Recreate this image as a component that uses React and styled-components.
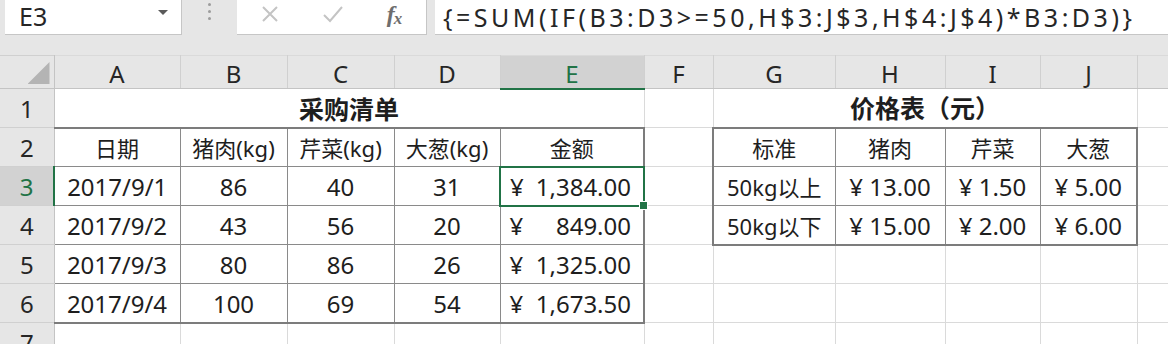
import React from 'react';
import styled, { createGlobalStyle } from 'styled-components';

const GlobalStyle = createGlobalStyle`
  html, body { margin: 0; padding: 0; background: #e6e6e6; overflow: hidden; }
  body { font-family: "Noto Sans", "Noto Sans CJK SC", sans-serif; }
`;

const GREEN = '#217346';
const GRID = '1px solid #dadada';
const HEAD_LINE = '1px solid #c4c4c4';
const HEAD_SEP = '1px solid #d0d0d0';
const THIN_DARK = '1px solid #8a8a8a';
const THICK_DARK = '2px solid #7c7c7c';
const SELECT = `2px solid ${GREEN}`;

const COLUMNS = [
  { key: '', w: 54 },
  { key: 'A', w: 126 },
  { key: 'B', w: 107 },
  { key: 'C', w: 107 },
  { key: 'D', w: 106 },
  { key: 'E', w: 144 },
  { key: 'F', w: 69 },
  { key: 'G', w: 122 },
  { key: 'H', w: 110 },
  { key: 'I', w: 95 },
  { key: 'J', w: 97 },
  { key: 'K', w: 90 },
];

const SELECTED = { r: 3, c: 5 };

const TABLES = [
  { r0: 2, r1: 6, c0: 1, c1: 5 },
  { r0: 2, r1: 4, c0: 7, c1: 10 },
];

const tableOf = (r, c) =>
  TABLES.findIndex((t) => r >= t.r0 && r <= t.r1 && c >= t.c0 && c <= t.c1);

// Shared edge below row r in column c
const hEdge = (r, c) => {
  if (r === 0) {
    if (c === SELECTED.c) return SELECT;
    return HEAD_LINE;
  }
  if (c === 0) return HEAD_SEP;
  if (c === SELECTED.c && (r === SELECTED.r || r + 1 === SELECTED.r)) return SELECT;
  const a = tableOf(r, c);
  const b = tableOf(r + 1, c);
  if (a >= 0 && a === b) return THIN_DARK;
  if (a >= 0 || b >= 0) return THICK_DARK;
  return GRID;
};

// Shared edge right of column c in row r
const vEdge = (r, c) => {
  if (r === 0) return c === 0 ? HEAD_LINE : HEAD_SEP;
  if (c === 0) return r === SELECTED.r ? SELECT : HEAD_LINE;
  if (r === SELECTED.r && (c === SELECTED.c || c + 1 === SELECTED.c)) return SELECT;
  const a = tableOf(r, c);
  const b = tableOf(r, c + 1);
  if (a >= 0 && a === b) return THIN_DARK;
  if (a >= 0 || b >= 0) return THICK_DARK;
  return GRID;
};

const edges = (r, c, span = 1) => ({
  $t: hEdge(r - 1, c),
  $b: hEdge(r, c),
  $l: c === 0 ? 'none' : vEdge(r, c - 1),
  $r: vEdge(r, c + span - 1),
});

/* ---------- formula bar ---------- */

const Frame = styled.div`
  width: 1168px;
  height: 344px;
  overflow: hidden;
  background: #e6e6e6;
  display: flex;
  flex-direction: column;
`;

const FormulaBar = styled.div`
  display: flex;
  height: 35px;
  padding-left: 5px;
  margin-bottom: 20px;
  flex: none;
`;

const Box = styled.div`
  background: #fff;
  border-bottom: 1px solid #c6c6c6;
  border-right: 1px solid #c6c6c6;
  box-sizing: border-box;
  height: 35px;
  display: flex;
  align-items: center;
  padding-bottom: 2px;
  line-height: 1.2;
`;

const NameBox = styled(Box)`
  width: 177px;
  padding-left: 14px;
  padding-right: 13px;
  justify-content: space-between;
  font-size: 25px;
  color: #262626;
`;

const DropArrow = styled.span`
  width: 0;
  height: 0;
  border-left: 5px solid transparent;
  border-right: 5px solid transparent;
  border-top: 5px solid #5a5a5a;
  margin-top: -8px;
`;

const Grip = styled.div`
  width: 55px;
  display: flex;
  flex-direction: column;
  align-items: center;
  gap: 4px;
  padding-top: 3px;
`;

const GripDot = styled.span`
  width: 3px;
  height: 3px;
  border-radius: 50%;
  background: #9c9c9c;
`;

const ButtonBox = styled(Box)`
  width: 190px;
  display: grid;
  grid-template-columns: 66px 60px 62px;
  justify-items: center;
  padding-bottom: 6px;
`;

const Fx = styled.span`
  font-family: "Liberation Serif", serif;
  font-style: italic;
  font-weight: bold;
  font-size: 24px;
  line-height: 1;
  color: #6e6e6e;
  letter-spacing: -1px;
  sub {
    font-size: 17px;
    vertical-align: -2px;
  }
`;

const FormulaInput = styled(Box)`
  flex: 1;
  min-width: 0;
  margin-left: 8px;
  padding: 0 0 0 8px;
  border-right: none;
  font-size: 25px;
  line-height: normal;
  color: #262626;
  letter-spacing: 3.5px;
  white-space: nowrap;
`;

const CancelIcon = () => (
  <svg width="20" height="20" viewBox="0 0 20 20">
    <path d="M3 3 L17 17 M17 3 L3 17" stroke="#c4c4c4" strokeWidth="2" fill="none" />
  </svg>
);

const EnterIcon = () => (
  <svg width="22" height="20" viewBox="0 0 22 20">
    <path d="M2 11 L8 17 L20 3" stroke="#c4c4c4" strokeWidth="2" fill="none" />
  </svg>
);

/* ---------- sheet ---------- */

const Sheet = styled.table`
  border-collapse: collapse;
  table-layout: fixed;
  width: ${COLUMNS.reduce((s, c) => s + c.w, 0)}px;
  background: #fff;
  font-size: 22px;
  color: #1e1e1e;
`;

const Col = styled.col`
  width: ${(p) => p.$w}px;
`;

const HeaderRow = styled.tr`
  height: 33px;
`;

const Row = styled.tr`
  height: 39px;
`;

const Cell = styled.td`
  padding: 2px 2px 0;
  position: relative;
  white-space: nowrap;
  overflow: visible;
  text-align: ${(p) => p.$align || 'center'};
  vertical-align: middle;
  line-height: 1;
  font-weight: ${(p) => (p.$bold ? 700 : 400)};
  font-size: ${(p) => (p.$bold ? '25px' : p.$num ? '24px' : '22px')};
  border-top: ${(p) => p.$t};
  border-bottom: ${(p) => p.$b};
  border-left: ${(p) => p.$l};
  border-right: ${(p) => p.$r};
`;

const ColHead = styled(Cell)`
  background: ${(p) => (p.$active ? '#d2d2d2' : '#e6e6e6')};
  color: ${(p) => (p.$active ? GREEN : '#262626')};
  font-size: 24px;
  padding-top: 4px;
`;

const RowHead = styled(Cell)`
  background: ${(p) => (p.$active ? '#d2d2d2' : '#e6e6e6')};
  color: ${(p) => (p.$active ? GREEN : '#262626')};
  font-size: 24px;
`;

const Corner = styled(Cell)`
  background: #e6e6e6;
  padding: 0;
`;

const CornerMark = styled.span`
  position: absolute;
  right: 4px;
  bottom: 4px;
  width: 22px;
  height: 22px;
  background: #b4b4b4;
  clip-path: polygon(100% 0, 100% 100%, 0 100%);
`;

const Money = styled.span`
  display: flex;
  justify-content: space-between;
  padding: 0 10px 0 7px;
`;

const FillHandle = styled.span`
  position: absolute;
  right: -5px;
  bottom: -5px;
  width: 7px;
  height: 7px;
  background: ${GREEN};
  border: 1px solid #fff;
  z-index: 2;
`;

const purchases = [
  ['2017/9/1', 86, 40, 31, '1,384.00'],
  ['2017/9/2', 43, 56, 20, '849.00'],
  ['2017/9/3', 80, 86, 26, '1,325.00'],
  ['2017/9/4', 100, 69, 54, '1,673.50'],
];

const prices = [
  ['50kg以上', '¥ 13.00', '¥ 1.50', '¥ 5.00'],
  ['50kg以下', '¥ 15.00', '¥ 2.00', '¥ 6.00'],
];

const blank = (r, from, to) =>
  Array.from({ length: to - from + 1 }, (_, i) => {
    const c = from + i;
    return <Cell key={c} {...edges(r, c)} />;
  });

const RowHeader = ({ r }) => (
  <RowHead $active={r === SELECTED.r} {...edges(r, 0)}>
    {r}
  </RowHead>
);

export default function App() {
  return (
    <Frame>
      <GlobalStyle />
      <FormulaBar>
        <NameBox>
          <span>E3</span>
          <DropArrow />
        </NameBox>
        <Grip>
          <GripDot />
          <GripDot />
          <GripDot />
        </Grip>
        <ButtonBox>
          <CancelIcon />
          <EnterIcon />
          <Fx>
            f<sub>x</sub>
          </Fx>
        </ButtonBox>
        <FormulaInput>{'{=SUM(IF(B3:D3>=50,H$3:J$3,H$4:J$4)*B3:D3)}'}</FormulaInput>
      </FormulaBar>

      <Sheet>
        <colgroup>
          {COLUMNS.map((col, i) => (
            <Col key={i} $w={col.w} />
          ))}
        </colgroup>
        <tbody>
          <HeaderRow>
            <Corner {...edges(0, 0)}>
              <CornerMark />
            </Corner>
            {COLUMNS.slice(1).map((col, i) => (
              <ColHead key={col.key} $active={i + 1 === SELECTED.c} {...edges(0, i + 1)}>
                {col.key === 'K' ? '' : col.key}
              </ColHead>
            ))}
          </HeaderRow>

          <Row>
            <RowHeader r={1} />
            <Cell colSpan={5} $bold {...edges(1, 1, 5)}>
              采购清单
            </Cell>
            {blank(1, 6, 6)}
            <Cell colSpan={4} $bold {...edges(1, 7, 4)}>
              价格表（元）
            </Cell>
            {blank(1, 11, 11)}
          </Row>

          <Row>
            <RowHeader r={2} />
            {['日期', '猪肉(kg)', '芹菜(kg)', '大葱(kg)', '金额'].map((t, i) => (
              <Cell key={i} {...edges(2, i + 1)}>
                {t}
              </Cell>
            ))}
            {blank(2, 6, 6)}
            {['标准', '猪肉', '芹菜', '大葱'].map((t, i) => (
              <Cell key={t} {...edges(2, i + 7)}>
                {t}
              </Cell>
            ))}
            {blank(2, 11, 11)}
          </Row>

          {purchases.map((p, idx) => {
            const r = idx + 3;
            const price = prices[idx];
            return (
              <Row key={r}>
                <RowHeader r={r} />
                {p.slice(0, 4).map((v, i) => (
                  <Cell key={i} $num {...edges(r, i + 1)}>
                    {v}
                  </Cell>
                ))}
                <Cell $align="left" $num {...edges(r, 5)}>
                  <Money>
                    <span>¥</span>
                    <span>{p[4]}</span>
                  </Money>
                  {r === SELECTED.r && <FillHandle />}
                </Cell>
                {blank(r, 6, 6)}
                {price
                  ? price.map((v, i) => (
                      <Cell key={i} $num={i > 0} {...edges(r, i + 7)}>
                        {v}
                      </Cell>
                    ))
                  : blank(r, 7, 10)}
                {blank(r, 11, 11)}
              </Row>
            );
          })}

          <Row>
            <RowHeader r={7} />
            {blank(7, 1, 11)}
          </Row>
        </tbody>
      </Sheet>
    </Frame>
  );
}
